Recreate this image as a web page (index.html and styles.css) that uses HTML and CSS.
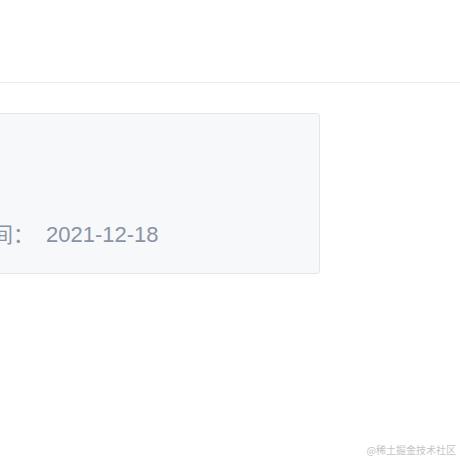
FILE: index.html
```html
<!DOCTYPE html>
<html lang="zh-CN">
<head>
    <meta charset="UTF-8">
    <meta name="viewport" content="width=device-width, initial-scale=1.0">
    <title>详情</title>
    <link rel="stylesheet" href="styles.css">
</head>
<body>
    <header class="top-bar"></header>

    <main class="content">
        <div class="info-card">
            <div class="info-row">
                <span class="info-label">创建时间：</span>
                <span class="info-value">2021-12-18</span>
            </div>
        </div>
    </main>

    <div class="watermark">@稀土掘金技术社区</div>
</body>
</html>
```

FILE: styles.css
```css
body {
    font-family: "Liberation Sans", "Noto Sans CJK SC", sans-serif;
    background-color: #ffffff;
    margin: 0;
    padding: 0;
    width: 460px;
    height: 460px;
    overflow: hidden;
    position: relative;
}

.top-bar {
    height: 82px;
    border-bottom: 1px solid #ebebeb;
}

.content {
    padding-top: 30px;
}

.info-card {
    margin-left: -200px;
    width: 518px;
    background-color: #f7f8fa;
    border: 1px solid #e4e6eb;
    border-radius: 3px;
    display: flex;
    flex-direction: column;
    justify-content: flex-end;
    padding-bottom: 25px;
    height: 134px;
}

.info-row {
    display: flex;
    align-items: baseline;
    font-size: 22px;
    color: #8a93a3;
    padding-left: 128px;
}

.info-label {
    font-family: "Noto Sans CJK SC", sans-serif;
    font-size: 21px;
}

.info-value {
    margin-left: 12px;
}

.watermark {
    position: absolute;
    right: 4px;
    bottom: 3px;
    font-family: "Noto Sans CJK SC", sans-serif;
    font-size: 10px;
    color: #c4c4c4;
}
```
